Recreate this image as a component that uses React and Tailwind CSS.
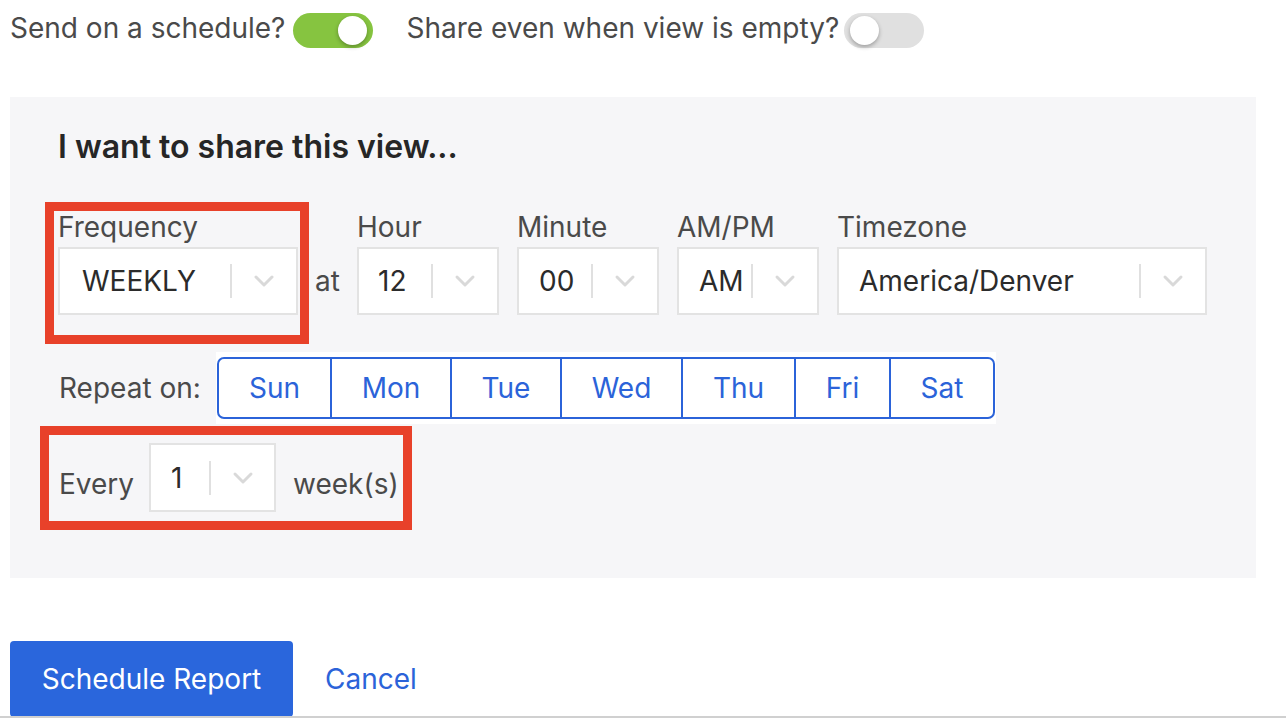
import React from "react";

function Chevron() {
  return (
    <svg width="22" height="14" viewBox="0 0 22 14" fill="none">
      <path d="M3 3 L11 11 L19 3" stroke="#d9d9d9" strokeWidth="3" strokeLinecap="round" strokeLinejoin="round" />
    </svg>
  );
}

function Select({ value, width, padL = "pl-[22px]" }) {
  return (
    <div className={`flex items-center h-[68px] bg-white border-2 border-[#e3e3e3] ${width}`}>
      <span className={`flex-1 ${padL} text-[28px] text-[#2b2b2b] truncate`}>{value}</span>
      <span className="w-[2px] h-[34px] bg-[#e0e0e0]"></span>
      <span className="w-[64px] flex items-center justify-center">
        <Chevron />
      </span>
    </div>
  );
}

function Toggle({ on }) {
  return (
    <div
      className={`relative w-[80px] h-[35px] rounded-full ${on ? "bg-[#86c440]" : "bg-[#e0e0e0]"}`}
    >
      <div
        className={`absolute top-[3px] w-[29px] h-[29px] rounded-full bg-white shadow-[0_2px_4px_rgba(0,0,0,0.3)] ${on ? "left-[45px]" : "left-[6px]"}`}
      ></div>
    </div>
  );
}

export default function App() {
  const days = [
    ["Sun", "w-[111px]"],
    ["Mon", "w-[120px]"],
    ["Tue", "w-[110px]"],
    ["Wed", "w-[121px]"],
    ["Thu", "w-[113px]"],
    ["Fri", "w-[95px]"],
    ["Sat", "w-[104px]"],
  ];
  return (
    <div
      className="w-[1286px] h-[718px] bg-white text-[#4a4a4a] overflow-hidden relative"
      style={{ fontFamily: "Inter, 'Noto Sans', sans-serif" }}
    >
      <div className="flex items-center h-[60px] pl-[10px] text-[28px]">
        <span className="pb-[4px]">Send on a schedule?</span>
        <div className="ml-[8px]">
          <Toggle on />
        </div>
        <span className="ml-[33px] pb-[4px]">Share even when view is empty?</span>
        <div className="ml-[5px]">
          <Toggle on={false} />
        </div>
      </div>

      <div className="mt-[37px] ml-[10px] w-[1246px] h-[481px] bg-[#f6f6f8] pt-[30px] pl-[48px]">
        <div className="text-[32px] font-semibold text-[#262626] leading-[40px]">
          I want to share this view...
        </div>

        <div className="flex items-end mt-[45px]">
          <div className="relative flex flex-col">
            <div className="absolute left-[-13px] top-[-10px] w-[264px] h-[142px] border-[9px] border-[#e8412a]"></div>
            <span className="text-[28px] leading-[30px] mb-[5px]">Frequency</span>
            <Select value="WEEKLY" width="w-[240px]" />
          </div>
          <span className="w-[59px] h-[68px] flex items-center justify-center text-[28px]">at</span>
          <div className="flex flex-col">
            <span className="text-[28px] leading-[30px] mb-[5px]">Hour</span>
            <Select value="12" width="w-[142px]" padL="pl-[19px]" />
          </div>
          <div className="flex flex-col ml-[18px]">
            <span className="text-[28px] leading-[30px] mb-[5px]">Minute</span>
            <Select value="00" width="w-[142px]" padL="pl-[20px]" />
          </div>
          <div className="flex flex-col ml-[18px]">
            <span className="text-[28px] leading-[30px] mb-[5px]">AM/PM</span>
            <Select value="AM" width="w-[142px]" padL="pl-[20px]" />
          </div>
          <div className="flex flex-col ml-[18px]">
            <span className="text-[28px] leading-[30px] mb-[5px]">Timezone</span>
            <Select value="America/Denver" width="w-[370px]" padL="pl-[20px]" />
          </div>
        </div>

        <div className="flex items-center mt-[37px]">
          <span className="w-[158px] pl-[1px] text-[28px]">Repeat on:</span>
          <div className="bg-white py-[5px] px-px">
            <div className="flex h-[62px] border-2 border-[#2b63d9] rounded-[7px] overflow-hidden">
              {days.map(([d, w], i) => (
                <div
                  key={d}
                  className={`${w} flex items-center justify-center text-[28px] text-[#2b63d9] ${i > 0 ? "border-l-2 border-[#2b63d9]" : ""}`}
                >
                  {d}
                </div>
              ))}
            </div>
          </div>
        </div>

        <div className="relative flex items-center mt-[19px] h-[69px]">
          <div className="absolute left-[-18px] top-[-17px] w-[372px] h-[104px] border-[9px] border-[#e8412a]"></div>
          <span className="w-[91px] pl-[1px] text-[28px] pt-[12px]">Every</span>
          <div className="flex items-center h-[69px] w-[127px] bg-white border-2 border-[#e3e3e3]">
            <span className="w-[58px] pl-[20px] text-[28px] text-[#2b2b2b]">1</span>
            <span className="w-[2px] h-[34px] bg-[#e0e0e0]"></span>
            <span className="flex-1 flex items-center justify-center">
              <Chevron />
            </span>
          </div>
          <span className="ml-[17px] text-[28px] pt-[12px]">week(s)</span>
        </div>
      </div>

      <div className="flex items-center mt-[63px] ml-[10px]">
        <button className="w-[283px] h-[76px] bg-[#2a66dc] text-white text-[28px] rounded-[4px]">
          Schedule Report
        </button>
        <span className="ml-[32px] text-[28px] text-[#2b63d9]">Cancel</span>
      </div>
      <div className="absolute left-0 right-0 bottom-0 h-[2px] bg-[#d0d0d0]"></div>
    </div>
  );
}
